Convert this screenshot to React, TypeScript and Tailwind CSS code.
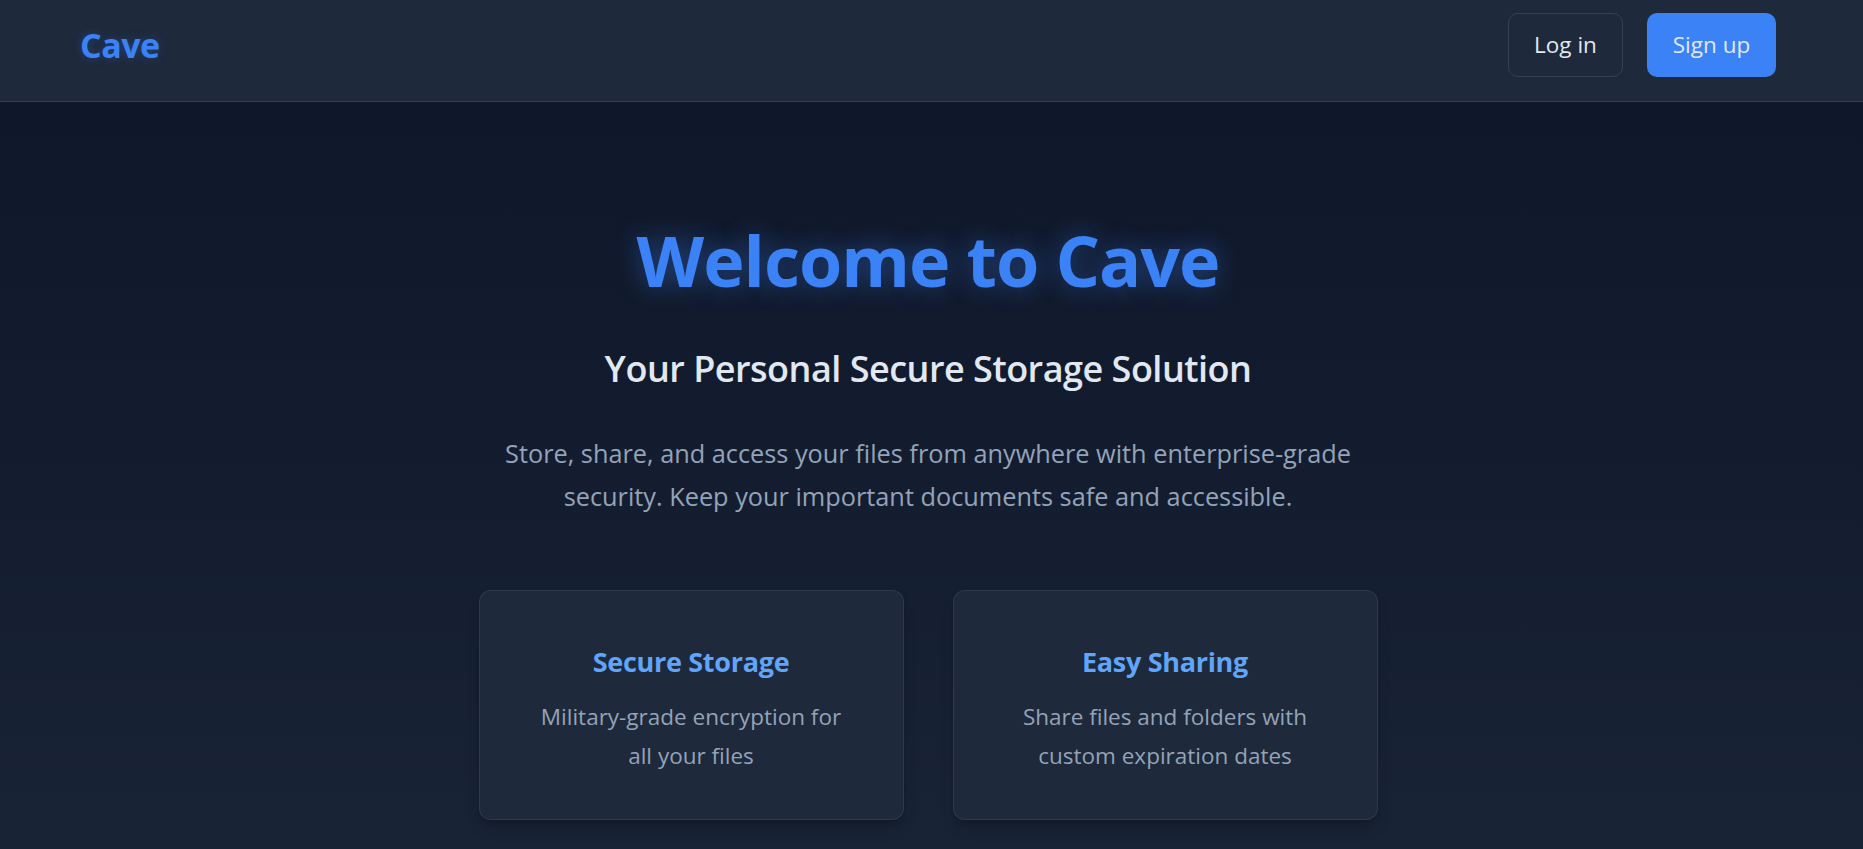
import React from "react";

export default function App() {
  return (
    <div className="min-h-screen flex flex-col font-['Open_Sans',sans-serif] bg-[#0f172a]">
      <header className="h-[102px] shrink-0 bg-[#1e293b] border-b border-[#334155] flex items-center justify-between pl-[80px] pr-[87px] pb-[11px]">
        <div className="text-[34px] font-bold leading-none text-[#3b82f6] [text-shadow:0_0_10px_rgba(59,130,246,0.3)] tracking-[-0.5px]">
          Cave
        </div>
        <div className="flex items-center gap-[24px]">
          <button className="w-[115px] h-[64px] rounded-[10px] border border-[#334155] text-[22.5px] text-[#e2e8f0] flex items-center justify-center">
            Log in
          </button>
          <button className="w-[129px] h-[64px] rounded-[10px] bg-[#3b82f6] text-[22.5px] text-[#e2e8f0] flex items-center justify-center">
            Sign up
          </button>
        </div>
      </header>
      <main className="flex-1 min-h-[747px] bg-linear-to-b from-[#0f172a] to-[#182335] flex flex-col items-center pr-[7px] pt-[123px] text-center">
        <h1 className="text-[70px] leading-none font-bold text-[#3b82f6] [text-shadow:0_0_26px_rgba(59,130,246,0.45)] tracking-[-1px]">
          Welcome to Cave
        </h1>
        <h2 className="mt-[56px] text-[36px] leading-none font-semibold text-[#e2e8f0] tracking-[-0.5px]">
          Your Personal Secure Storage Solution
        </h2>
        <p className="mt-[45px] text-[25.3px] leading-[43px] text-[#94a3b8]">
          Store, share, and access your files from anywhere with enterprise-grade
          <br />
          security. Keep your important documents safe and accessible.
        </p>
        <div className="mt-[72px] flex gap-[49px]">
          <div className="w-[425px] h-[230px] rounded-[12px] bg-[#1e293b] border border-[#334155]/70 shadow-lg shadow-black/20 pt-[51px] flex flex-col items-center">
            <h3 className="text-[27px] leading-[40px] font-bold text-[#60a5fa] tracking-[-0.3px]">Secure Storage</h3>
            <p className="mt-[15px] text-[22.5px] leading-[39px] text-[#94a3b8]">
              Military-grade encryption for
              <br />
              all your files
            </p>
          </div>
          <div className="w-[425px] h-[230px] rounded-[12px] bg-[#1e293b] border border-[#334155]/70 shadow-lg shadow-black/20 pt-[51px] flex flex-col items-center">
            <h3 className="text-[27px] leading-[40px] font-bold text-[#60a5fa] tracking-[-0.3px]">Easy Sharing</h3>
            <p className="mt-[15px] text-[22.5px] leading-[39px] text-[#94a3b8]">
              Share files and folders with
              <br />
              custom expiration dates
            </p>
          </div>
        </div>
      </main>
    </div>
  );
}
